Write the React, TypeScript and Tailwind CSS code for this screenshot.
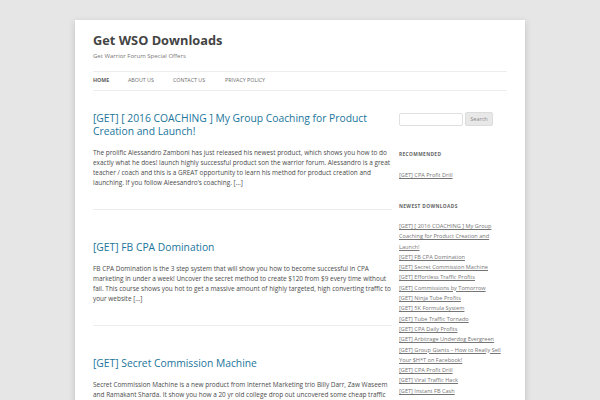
import React from "react";

const font = { fontFamily: '"Open Sans", "Liberation Sans", sans-serif' };

const posts = [
  {
    title: ["[GET] [ 2016 COACHING ] My Group Coaching for Product", "Creation and Launch!"],
    body: [
      "The prolific Alessandro Zamboni has just released his newest product, which shows you how to do",
      "exactly what he does! launch highly successful product son the warrior forum. Alessandro is a great",
      "teacher / coach and this is a GREAT opportunity to learn his method for product creation and",
      "launching. If you follow Aleesandro\u2019s coaching. [\u2026]",
    ],
  },
  {
    title: ["[GET] FB CPA Domination"],
    body: [
      "FB CPA Domination is the 3 step system that will show you how to become successful in CPA",
      "marketing in under a week! Uncover the secret method to create $120 from $9 every time without",
      "fail. This course shows you hot to get a massive amount of highly targeted, high converting traffic to",
      "your website [\u2026]",
    ],
  },
  {
    title: ["[GET] Secret Commission Machine"],
    body: [
      "Secret Commission Machine is a new product from Internet Marketing trio Billy Darr, Zaw Waseem",
      "and Ramakant Sharda. It show you how a 20 yr old college drop out uncovered some cheap traffic",
    ],
  },
];

const newest = [
  ["[GET] [ 2016 COACHING ] My Group", "Coaching for Product Creation and", "Launch!"],
  ["[GET] FB CPA Domination"],
  ["[GET] Secret Commission Machine"],
  ["[GET] Effortless Traffic Profits"],
  ["[GET] Commissions by Tomorrow"],
  ["[GET] Ninja Tube Profits"],
  ["[GET] 5K Formula System"],
  ["[GET] Tube Traffic Tornado"],
  ["[GET] CPA Daily Profits"],
  ["[GET] Arbitrage Underdog Evergreen"],
  ["[GET] Group Giants \u2013 How to Really Sell", "Your $H*T on Facebook!"],
  ["[GET] CPA Profit Drill"],
  ["[GET] Viral Traffic Hack"],
  ["[GET] Instant FB Cash"],
];

export default function App() {
  return (
    <div className="h-[400px] overflow-hidden bg-[#e6e6e6] pt-[20px] px-[75px]" style={font}>
      <div className="bg-white h-[400px] px-[18px] pt-[13px] shadow-[0_2px_6px_rgba(100,100,100,0.3)]">
        <header>
          <h1 className="text-[12.8px] leading-[15px] font-bold text-[#444]">Get WSO Downloads</h1>
          <p className="mt-[4px] text-[6px] leading-[8px] text-[#777]">Get Warrior Forum Special Offers</p>
          <nav className="mt-[11px] h-[20px] border-y border-[#ededed] flex items-center text-[5.3px] uppercase text-[#6a6a6a]">
            <span className="font-bold text-[#5e5e5e] w-[35px]">Home</span>
            <span className="w-[45px]">About Us</span>
            <span className="w-[52px]">Contact Us</span>
            <span>Privacy Policy</span>
          </nav>
        </header>
        <div className="flex gap-[7px] mt-[18px]">
          <main className="w-[299px] shrink-0 pt-[3px]">
            {posts.map((p, i) => (
              <article key={i} className={i > 0 ? "mt-[31px]" : ""}>
                <h2 className="text-[10.3px] leading-[13px] text-[#21759b] whitespace-nowrap">
                  {p.title.map((t, j) => (
                    <div key={j}>{t}</div>
                  ))}
                </h2>
                <div className="mt-[10px] text-[6.45px] leading-[10px] text-[#4a4a4a] whitespace-nowrap">
                  {p.body.map((t, j) => (
                    <div key={j}>{t}</div>
                  ))}
                </div>
                <div className="mt-[21px] border-b border-[#ededed]" />
              </article>
            ))}
          </main>
          <aside className="flex-1 pt-[3px]">
            <div className="flex items-center gap-[2px]">
              <div className="w-[64px] h-[13px] border border-[#e0e0e0] rounded-[2px] bg-white" />
              <div className="w-[28px] h-[14px] rounded-[2px] bg-[#e8e8e8] border border-[#dcdcdc] text-[5.5px] text-[#8a8a8a] flex items-center justify-center">
                Search
              </div>
            </div>
            <h3 className="mt-[24px] text-[4.8px] leading-[8px] font-bold uppercase tracking-[0.08em] text-[#636363]">
              Recommended
            </h3>
            <div className="mt-[12px] text-[5.6px] leading-[10px] text-[#757575] underline">[GET] CPA Profit Drill</div>
            <h3 className="mt-[22px] text-[4.8px] leading-[8px] font-bold uppercase tracking-[0.08em] text-[#636363]">
              Newest Downloads
            </h3>
            <ul className="mt-[11px] text-[5.6px] leading-[10.3px] text-[#757575] whitespace-nowrap">
              {newest.map((item, i) => (
                <li key={i}>
                  {item.map((t, j) => (
                    <div key={j} className="underline">{t}</div>
                  ))}
                </li>
              ))}
            </ul>
          </aside>
        </div>
      </div>
    </div>
  );
}
